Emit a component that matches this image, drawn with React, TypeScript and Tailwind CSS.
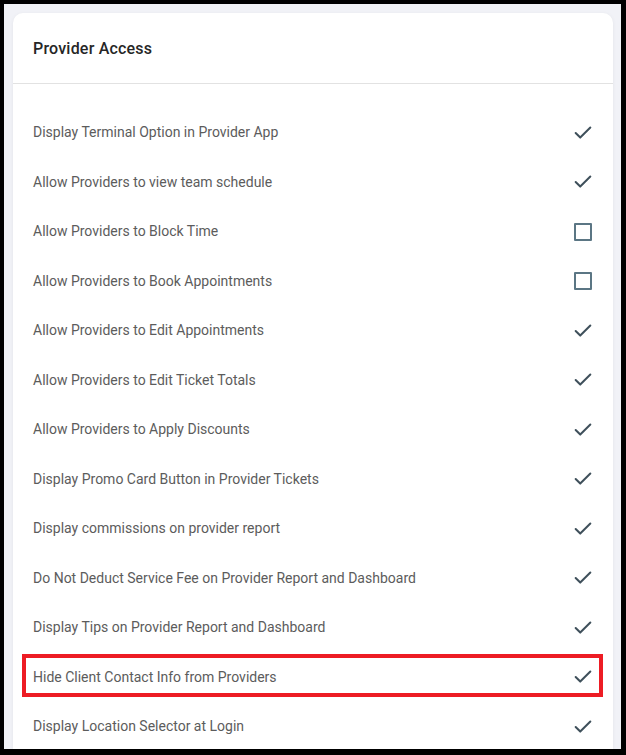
import React from 'react'

interface Setting {
  label: string
  enabled: boolean
  highlight?: boolean
}

const settings: Setting[] = [
  { label: 'Display Terminal Option in Provider App', enabled: true },
  { label: 'Allow Providers to view team schedule', enabled: true },
  { label: 'Allow Providers to Block Time', enabled: false },
  { label: 'Allow Providers to Book Appointments', enabled: false },
  { label: 'Allow Providers to Edit Appointments', enabled: true },
  { label: 'Allow Providers to Edit Ticket Totals', enabled: true },
  { label: 'Allow Providers to Apply Discounts', enabled: true },
  { label: 'Display Promo Card Button in Provider Tickets', enabled: true },
  { label: 'Display commissions on provider report', enabled: true },
  { label: 'Do Not Deduct Service Fee on Provider Report and Dashboard', enabled: true },
  { label: 'Display Tips on Provider Report and Dashboard', enabled: true },
  { label: 'Hide Client Contact Info from Providers', enabled: true, highlight: true },
  { label: 'Display Location Selector at Login', enabled: true },
]

const CheckMark = () => (
  <svg width="22" height="22" viewBox="0 0 24 24" fill="none" stroke="#3f505b" strokeWidth="2.2" strokeLinecap="round" strokeLinejoin="round">
    <path d="M20 6 9 17l-5-5" />
  </svg>
)

const SettingRow: React.FC<{ setting: Setting }> = ({ setting }) => (
  <div className="relative flex h-[49.5px] items-center justify-between pl-5 pr-[19px]">
    <span className="text-[14px] text-[#5c5c5c]">{setting.label}</span>
    <div className="flex h-[22px] w-[22px] items-center justify-center">
      {setting.enabled ? (
        <CheckMark />
      ) : (
        <div className="h-[18px] w-[18px] rounded-[1px] border-2 border-[#5b7684]" />
      )}
    </div>
    {setting.highlight && (
      <div className="pointer-events-none absolute left-[9px] top-[1px] h-[43px] w-[581px] border-[4px] border-[#ed1c24]" />
    )}
  </div>
)

export default function App() {
  return (
    <div className="h-[755px] w-[626px] bg-black pb-[6px] pl-1 pr-[5px] pt-1" style={{ fontFamily: 'Roboto, "Liberation Sans", sans-serif' }}>
      <div className="h-full bg-[#f1f2f7] pl-[9px] pr-2 pt-[9px]">
        <div className="h-full overflow-hidden rounded-t-[10px] bg-white shadow-[0_1px_4px_rgba(0,0,0,0.06)]">
          <div className="border-b border-[#e2e2e2] px-5 pb-[22px] pt-6">
            <h2 className="text-[16px] font-medium leading-6 tracking-[0.2px] text-[#262626]">Provider Access</h2>
          </div>
          <div className="pt-6">
            {settings.map(s => (
              <SettingRow key={s.label} setting={s} />
            ))}
          </div>
        </div>
      </div>
    </div>
  )
}
